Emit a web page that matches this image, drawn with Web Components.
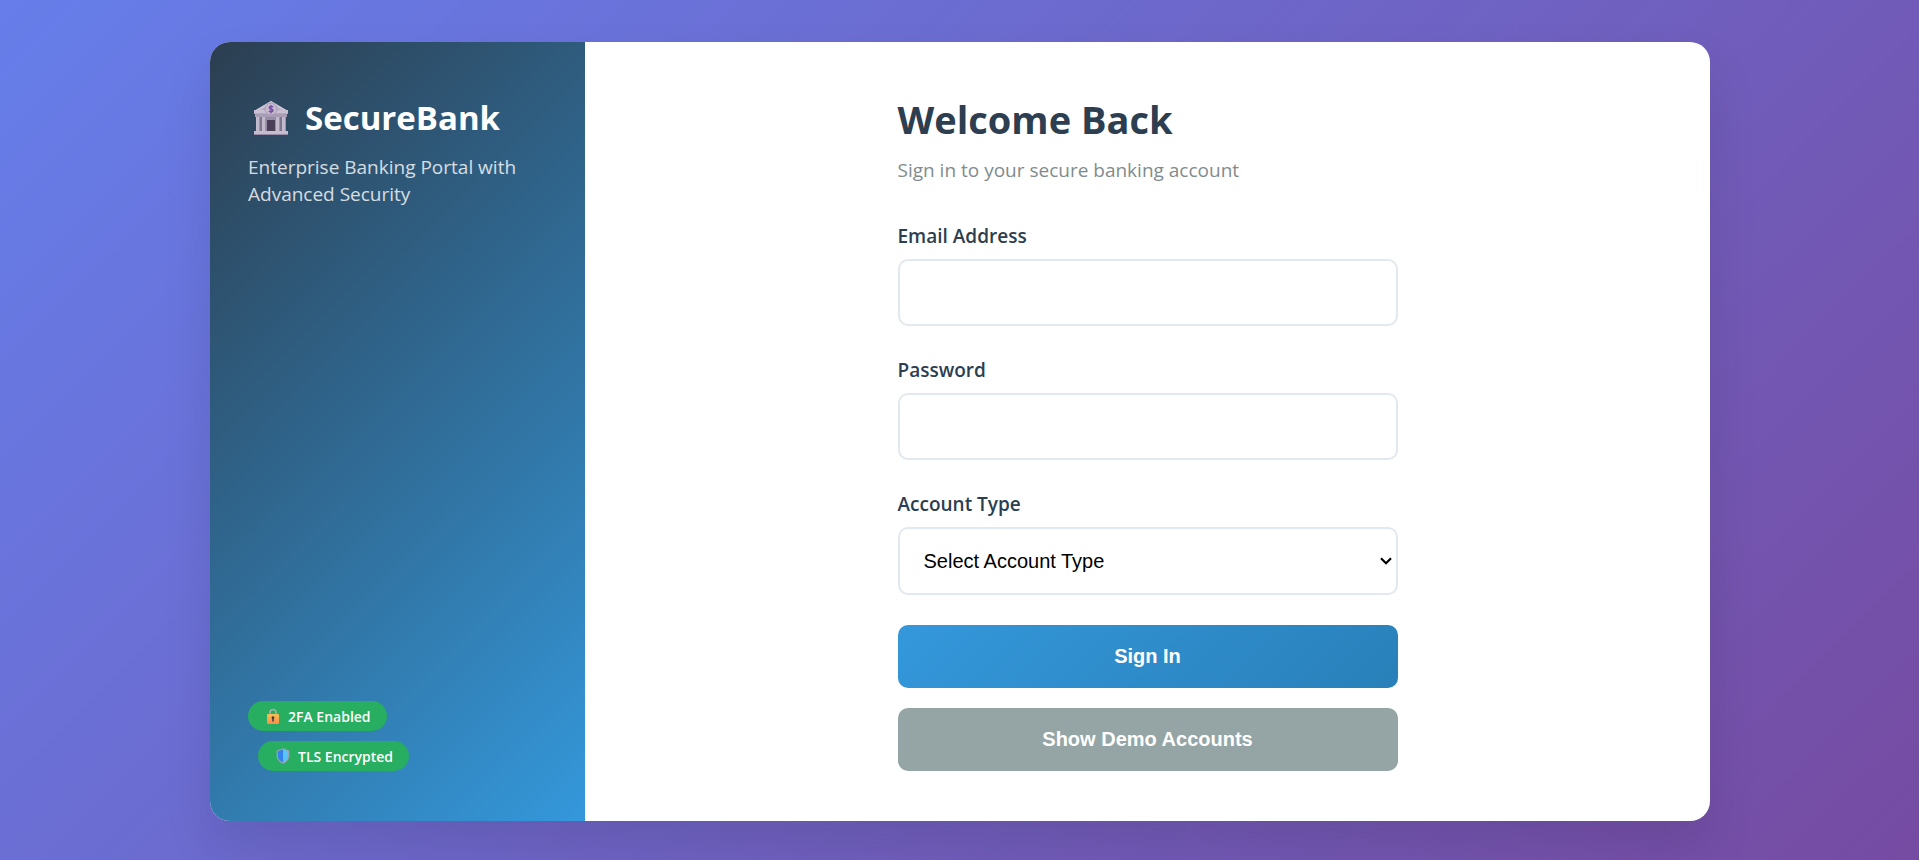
<!DOCTYPE html>
<html lang="en">
<head>
<meta charset="utf-8">
<meta name="viewport" content="width=device-width, initial-scale=1">
<title>SecureBank</title>
<style>
  * { box-sizing: border-box; }
  body {
    margin: 0;
    min-height: 100vh;
    padding: 42px 24px 39px 25px;
    display: flex;
    align-items: center;
    justify-content: center;
    font-family: "Segoe UI", "Open Sans", sans-serif;
    background: linear-gradient(135deg, #667eea 0%, #764ba2 100%);
  }
  bank-badge + bank-badge { margin-left: 10px; }
</style>
</head>
<body>
<bank-card>
  <bank-sidebar slot="side">
    <span slot="name">SecureBank</span>
    <span slot="tagline">Enterprise Banking Portal with Advanced Security</span>
    <bank-badge slot="badges" icon="lock">2FA Enabled</bank-badge>
    <bank-badge slot="badges" icon="shield">TLS Encrypted</bank-badge>
  </bank-sidebar>
  <bank-login></bank-login>
</bank-card>

<script>
const define = (name, html, init) => {
  const template = document.createElement('template');
  template.innerHTML = '<style>*{box-sizing:border-box}</style>' + html;
  customElements.define(name, class extends HTMLElement {
    connectedCallback() {
      if (this.shadowRoot) return;
      this.attachShadow({ mode: 'open' }).append(template.content.cloneNode(true));
      if (init) init(this, this.shadowRoot);
    }
  });
};

define('bank-card', `
  <style>
    :host {
      display: grid;
      grid-template-columns: 1fr 3fr;
      width: 100%;
      max-width: 1500px;
      overflow: hidden;
      border-radius: 20px;
      background: #fff;
      box-shadow: 0 25px 50px rgba(0, 0, 0, .1);
    }
    main { padding: 50px; display: flex; justify-content: center; }
    @media (max-width: 900px) { :host { grid-template-columns: 1fr; } }
  </style>
  <slot name="side"></slot>
  <main><slot></slot></main>`);

define('bank-sidebar', `
  <style>
    :host {
      display: flex;
      flex-direction: column;
      justify-content: space-between;
      gap: 40px;
      padding: 50px 38px;
      color: #fff;
      background: linear-gradient(135deg, #2c3e50 0%, #3498db 100%);
    }
    h1 {
      display: flex;
      align-items: center;
      gap: 16px;
      margin: 0 0 10px;
      padding-left: 5px;
      font-size: 33px;
      line-height: 52px;
      font-weight: 700;
    }
    svg { width: 36px; height: 36px; flex: none; }
    p { margin: 0; font-size: 19px; line-height: 27px; opacity: .8; }
    .badges { display: flex; flex-direction: column; align-items: flex-start; gap: 10px; }
  </style>
  <header>
    <h1>
      <svg viewBox="0 0 36 36" aria-hidden="true">
        <path d="M18 1 35 11v3H1v-3z" fill="#b4a9c2"/>
        <path d="M18 1 35 11H31L18 4 5 11H1z" fill="#cdc4d6"/>
        <path d="M3 16h30v15H3z" fill="#7f768e"/>
        <path d="M1 10h34v3H1z" fill="#c9c0d1"/>
        <path d="M2 14h32v3H2z" fill="#a79db4"/>
        <path d="M3 17h4v14H3zM9 17h4v14H9zM23 17h4v14h-4zM29 17h4v14h-4z" fill="#c2b9cc"/>
        <path d="M6 17h1v14H6zM12 17h1v14h-1zM26 17h1v14h-1zM32 17h1v14h-1z" fill="#9c92ab"/>
        <path d="M13 17h10v14H13z" fill="#988da6"/>
        <path d="M14 20h8v11h-8z" fill="#4a3f57"/>
        <path d="M1 31h34v4H1z" fill="#c5bdce"/>
        <path d="M1 34h34v1H1z" fill="#978ca5"/>
        <circle cx="18" cy="9" r="6" fill="#c4bace" stroke="#a99eb6"/>
        <path d="M20 7.200C19.500 6 16.200 6 16.200 7.700c0 1.700 3.800.9 3.800 2.800 0 1.700-3.300 1.700-4 .4M18 5v8.500" fill="none" stroke="#784fa5" stroke-width="1.400"/>
      </svg>
      <slot name="name"></slot>
    </h1>
    <p><slot name="tagline"></slot></p>
  </header>
  <div class="badges"><slot name="badges"></slot></div>`);

define('bank-badge', `
  <style>
    :host {
      display: inline-flex;
      align-items: center;
      gap: 6px;
      height: 30px;
      padding: 0 16px;
      border-radius: 15px;
      background: #27ae60;
      font-size: 14px;
      font-weight: 600;
      white-space: nowrap;
    }
    svg { width: 18px; height: 16px; display: none; flex: none; }
    :host([icon="lock"]) .lock, :host([icon="shield"]) .shield { display: block; }
  </style>
  <svg class="lock" viewBox="0 0 18 16" aria-hidden="true">
    <defs><linearGradient id="g" x1="0" y1="0" x2="0" y2="1"><stop stop-color="#f5c052"/><stop offset="1" stop-color="#fb8e4c"/></linearGradient></defs>
    <path d="M6 7V4.500a3 3 0 0 1 6 0V7" fill="none" stroke="#a9b0b3" stroke-width="1.500"/>
    <rect x="3" y="6" width="12" height="10" rx="1" fill="url(#g)"/>
    <path d="M9 8.200a1.500 1.500 0 0 1 .8 2.700V13.500H8.200v-2.600A1.500 1.500 0 0 1 9 8.200z" fill="#4b3a45"/>
  </svg>
  <svg class="shield" viewBox="0 0 18 16" aria-hidden="true">
    <path d="M9 .8 14.800 3v4.500c0 3.500-2.200 6-5.800 7.700C5.400 13.500 3.200 11 3.200 7.500V3z" fill="#3182ee"/>
    <path d="M9 .8 14.800 3v4.500c0 3.500-2.200 6-5.800 7.700z" fill="#57c5fb"/>
    <path d="M9 .8 14.800 3v4.500c0 3.500-2.200 6-5.800 7.700C5.400 13.500 3.200 11 3.200 7.500V3z" fill="none" stroke="#9aa3b1" stroke-width="1.200"/>
  </svg>
  <slot></slot>`);

define('bank-field', `
  <style>
    :host { display: block; }
    label {
      display: block;
      margin-bottom: 8px;
      font-size: 19px;
      line-height: 29px;
      font-weight: 600;
      color: #2c3e50;
    }
    input, select {
      display: block;
      width: 100%;
      height: 67px;
      padding: 0 20px;
      border: 2px solid #e1e8f0;
      border-radius: 10px;
      background: #fff;
      color: #000;
      font-family: "Liberation Sans", Arial, sans-serif;
      font-size: 20px;
    }
    select {
      height: 68px;
      padding: 0 24px;
      appearance: none;
      background: #fff url("data:image/svg+xml,%3Csvg xmlns='http://www.w3.org/2000/svg' width='12' height='8' viewBox='0 0 12 8'%3E%3Cpath d='M1 1.200 6 6.200 11 1.200' fill='none' stroke='black' stroke-width='2.200'/%3E%3C/svg%3E") no-repeat right 4px center;
    }
    input:focus, select:focus { outline: none; border-color: #3498db; }
  </style>
  <label for="control"></label>`, (host, root) => {
  const type = host.getAttribute('type');
  const control = document.createElement(type === 'select' ? 'select' : 'input');
  control.id = 'control';
  if (type === 'select') {
    host.getAttribute('options').split('|').forEach(text => control.add(new Option(text)));
  } else {
    control.type = type;
  }
  root.querySelector('label').textContent = host.getAttribute('label');
  root.append(control);
});

define('bank-button', `
  <style>
    :host { display: block; }
    button {
      display: block;
      width: 100%;
      height: 63px;
      border: 0;
      border-radius: 10px;
      color: #fff;
      background: linear-gradient(135deg, #3498db, #2980b9);
      font-family: "Liberation Sans", Arial, sans-serif;
      font-size: 20px;
      font-weight: 600;
      cursor: pointer;
    }
    :host([kind="secondary"]) button { background: #95a5a6; }
  </style>
  <button type="button"><slot></slot></button>`);

define('bank-login', `
  <style>
    :host { display: block; width: 100%; max-width: 500px; }
    h2 { margin: 0 0 10px; font-size: 38px; line-height: 55px; font-weight: 700; color: #2c3e50; }
    p { margin: 0 0 38px; font-size: 19px; line-height: 27px; color: #7f8c8d; }
    form { display: grid; gap: 30px; }
    .actions { display: grid; gap: 20px; }
  </style>
  <h2>Welcome Back</h2>
  <p>Sign in to your secure banking account</p>
  <form>
    <bank-field type="email" label="Email Address"></bank-field>
    <bank-field type="password" label="Password"></bank-field>
    <bank-field type="select" label="Account Type" options="Select Account Type|Personal|Business"></bank-field>
    <div class="actions">
      <bank-button>Sign In</bank-button>
      <bank-button kind="secondary">Show Demo Accounts</bank-button>
    </div>
  </form>`);
</script>
</body>
</html>
